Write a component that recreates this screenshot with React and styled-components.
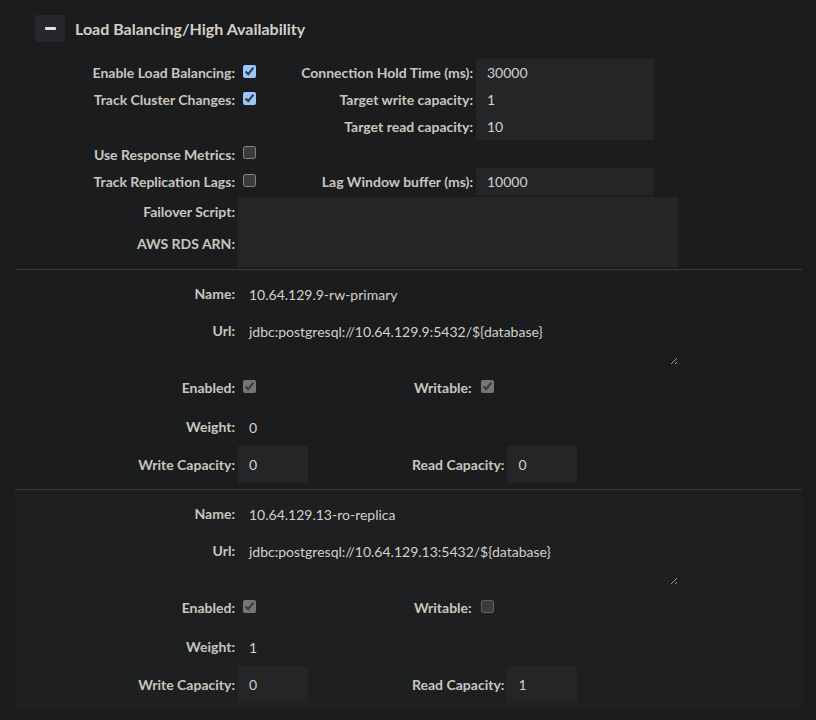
import styled, { createGlobalStyle } from 'styled-components';

const GlobalStyle = createGlobalStyle`
  html, body {
    margin: 0;
    background: #1b1c1e;
    color-scheme: dark;
  }
  body {
    font-family: Lato, "Liberation Sans", sans-serif;
    font-size: 14px;
    color: #d3d0ca;
  }
`;

const Page = styled.div`
  width: 816px;
  min-height: 720px;
`;

const Header = styled.div`
  display: flex;
  align-items: center;
  gap: 10px;
  padding: 15px 0 0 35px;
`;

const ToggleButton = styled.button`
  width: 30px;
  height: 27px;
  padding: 0;
  border: none;
  border-radius: 2px;
  background: #26272a;
  display: flex;
  align-items: center;
  justify-content: center;
  cursor: pointer;

  &::before {
    content: '';
    width: 11px;
    height: 3px;
    background: #e3e0d9;
    border-radius: 1px;
  }
`;

const Title = styled.h2`
  margin: 0;
  font-size: 16px;
  font-weight: 700;
  color: #d2cfc8;
  line-height: 27px;
`;

const SettingsGrid = styled.div`
  display: grid;
  grid-template-columns: 220px 50px 182px 178px;
  grid-template-rows: 27px 27px 27px 28px 29px 28px 42px;
  column-gap: 3px;
  margin: 17px 0 2px 15px;
`;

const Label = styled.label`
  font-weight: 700;
  font-size: 14px;
  color: #c9c6bf;
  text-align: right;
  white-space: nowrap;
  line-height: ${({ $lh }) => $lh || 28}px;
  align-self: start;
  grid-column: ${({ $col }) => $col || 'auto'};
  grid-row: ${({ $row }) => $row || 'auto'};
`;

const Check = styled.input.attrs({ type: 'checkbox' })`
  width: 13px;
  height: 13px;
  margin: ${({ $top }) => ($top ?? 6)}px 0 0 5px;
  align-self: start;
  justify-self: start;
  grid-column: ${({ $col }) => $col || 'auto'};
  grid-row: ${({ $row }) => $row || 'auto'};
`;

const Field = styled.input`
  box-sizing: border-box;
  width: ${({ $w }) => $w || 178}px;
  height: ${({ $h }) => $h || 27}px;
  padding: 0 11px;
  border: none;
  outline: none;
  background: ${({ $bare }) => ($bare ? 'transparent' : '#242527')};
  color: #d3d0ca;
  font-family: Lato, "Liberation Sans", sans-serif;
  font-size: 14px;
  align-self: start;
  grid-column: ${({ $col }) => $col || 'auto'};
  grid-row: ${({ $row }) => $row || 'auto'};
`;

const Server = styled.section`
  margin: 0 14px 0 15px;
  padding: 11px 0 6px;
  border-top: 1px solid #3a3b3d;
  background: ${({ $shade }) => ($shade ? '#1e1f21' : 'transparent')};
  display: flex;
  flex-direction: column;
`;

const Row = styled.div`
  display: flex;
  align-items: ${({ $top }) => ($top ? 'flex-start' : 'center')};
  margin-top: ${({ $gap }) => $gap || 0}px;
  height: ${({ $h }) => $h || 26}px;
`;

const ServerLabel = styled.label`
  width: ${({ $w }) => $w || 220}px;
  margin-right: 3px;
  text-align: right;
  font-weight: 700;
  color: #c9c6bf;
  white-space: nowrap;
  line-height: 26px;
`;

const PairLabel = styled(ServerLabel)`
  width: auto;
  text-align: left;
`;

const Cell = styled.div`
  width: ${({ $w }) => $w || 174}px;
  display: flex;
  align-items: center;
`;

const Url = styled.textarea`
  box-sizing: border-box;
  width: 440px;
  height: 47px;
  padding: 5px 11px;
  border: none;
  outline: none;
  background: transparent;
  color: #d3d0ca;
  font-family: Lato, "Liberation Sans", sans-serif;
  font-size: 14px;
  line-height: 17px;
`;

const BoxCheck = styled.input.attrs({ type: 'checkbox' })`
  width: 13px;
  height: 13px;
  margin: -3px 0 0 ${({ $left }) => $left || 5}px;
`;

const servers = [
  { name: '10.64.129.9-rw-primary', url: 'jdbc:postgresql://10.64.129.9:5432/${database}', enabled: true, writable: true, weight: '0', write: '0', read: '0' },
  { name: '10.64.129.13-ro-replica', url: 'jdbc:postgresql://10.64.129.13:5432/${database}', enabled: true, writable: false, weight: '1', write: '0', read: '1' },
];

export default function App() {
  return (
    <Page>
      <GlobalStyle />
      <Header>
        <ToggleButton aria-label="collapse" />
        <Title>Load Balancing/High Availability</Title>
      </Header>

      <SettingsGrid>
        <Label $col="1" $row="1">Enable Load Balancing:</Label>
        <Check $col="2" $row="1" defaultChecked />
        <Label $col="3" $row="1">Connection Hold Time (ms):</Label>
        <Field $col="4" $row="1" defaultValue="30000" />

        <Label $col="1" $row="2">Track Cluster Changes:</Label>
        <Check $col="2" $row="2" defaultChecked />
        <Label $col="3" $row="2">Target write capacity:</Label>
        <Field $col="4" $row="2" defaultValue="1" />

        <Label $col="3" $row="3">Target read capacity:</Label>
        <Field $col="4" $row="3" defaultValue="10" />

        <Label $col="1" $row="4" $lh={29}>Use Response Metrics:</Label>
        <Check $col="2" $row="4" />

        <Label $col="1" $row="5">Track Replication Lags:</Label>
        <Check $col="2" $row="5" />
        <Label $col="3" $row="5">Lag Window buffer (ms):</Label>
        <Field $col="4" $row="5" defaultValue="10000" />

        <Label $col="1" $row="6" $lh={29}>Failover Script:</Label>
        <Field $col="2 / span 3" $row="6" $w={440} $h={28} />

        <Label $col="1" $row="7" $lh={37}>AWS RDS ARN:</Label>
        <Field $col="2 / span 3" $row="7" $w={440} $h={42} />
      </SettingsGrid>

      {servers.map((s, i) => (
        <Server key={s.name} $shade={i === 1}>
          <Row>
            <ServerLabel>Name:</ServerLabel>
            <Field $bare $w={440} $h={26} defaultValue={s.name} />
          </Row>
          <Row $gap={11} $h={47} $top>
            <ServerLabel>Url:</ServerLabel>
            <Url defaultValue={s.url} />
          </Row>
          <Row $gap={10}>
            <ServerLabel>Enabled:</ServerLabel>
            <Cell $w={176}>
              <BoxCheck disabled defaultChecked={s.enabled} />
            </Cell>
            <PairLabel>Writable:</PairLabel>
            <BoxCheck disabled defaultChecked={s.writable} $left={6} />
          </Row>
          <Row $gap={13}>
            <ServerLabel>Weight:</ServerLabel>
            <Field $bare $w={100} $h={26} defaultValue={s.weight} />
          </Row>
          <Row $gap={6} $h={37}>
            <ServerLabel>Write Capacity:</ServerLabel>
            <Cell>
              <Field $w={70} $h={37} defaultValue={s.write} />
            </Cell>
            <PairLabel>Read Capacity:</PairLabel>
            <Field $w={70} $h={37} defaultValue={s.read} />
          </Row>
        </Server>
      ))}
    </Page>
  );
}
